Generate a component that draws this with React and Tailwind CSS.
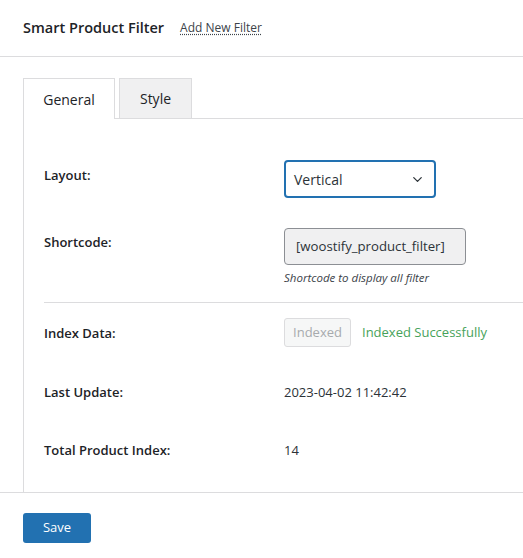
import { ChevronDown } from 'lucide-react'

const rowLabel = 'w-[240px] shrink-0 text-[13px] font-semibold leading-5 text-[#1d2327]'

export default function App() {
  return (
    <div className="min-h-[558px] bg-white font-['Open_Sans',sans-serif] text-[#1d2327]">
      {/* top bar */}
      <header className="flex h-[57px] items-center gap-4 border-b border-[#dcdcde] px-[23px]">
        <h1 className="text-[14.5px] font-semibold text-[#1d2327]">Smart Product Filter</h1>
        <a className="text-[12px] text-[#3c434a] underline decoration-dotted underline-offset-2">Add New Filter</a>
      </header>

      <main className="pl-[23px] pt-[21px]">
        {/* tabs */}
        <div className="flex items-end gap-1">
          <button className="relative z-10 -mb-px h-[41px] w-[92px] border border-b-0 border-[#dcdcde] bg-white text-[14px] text-[#1d2327]">
            General
          </button>
          <button className="h-[40px] w-[73px] border border-b-0 border-[#dcdcde] bg-[#f0f0f1] text-[14px] text-[#1d2327]">
            Style
          </button>
        </div>

        {/* panel */}
        <div className="border-l border-t border-[#dcdcde] pb-[32px] pt-[41px]">
          <div className="flex items-start pl-[20px]">
            <div className={`${rowLabel} pt-[5px]`}>Layout:</div>
            <div className="flex h-[38px] w-[152px] items-center justify-between rounded-[4px] border-2 border-[#2271b1] pl-[8px] pr-[9px] text-[14px] text-[#2c3338]">
              <span>Vertical</span>
              <ChevronDown size={15} strokeWidth={2} className="text-[#2c3338]" />
            </div>
          </div>

          <div className="mt-[30px] flex items-start pl-[20px]">
            <div className={`${rowLabel} pt-[4px]`}>Shortcode:</div>
            <div>
              <div className="flex h-[37px] w-[182px] items-center rounded-[4px] border border-[#8c8f94] bg-[#f0f0f1] px-[11px] text-[13.2px] text-[#2c3338]">
                [woostify_product_filter]
              </div>
              <p className="mt-[5px] text-[11.5px] italic leading-4 text-[#3c434a]">Shortcode to display all filter</p>
            </div>
          </div>

          <div className="ml-[20px] mt-[16px] border-t border-[#dcdcde]" />

          <div className="mt-[15px] flex items-center pl-[20px]">
            <div className={rowLabel}>Index Data:</div>
            <span className="flex h-[29px] w-[67px] items-center justify-center rounded-[3px] border border-[#dcdcde] bg-[#f6f7f7] text-[13px] text-[#a7aaad]">
              Indexed
            </span>
            <span className="ml-[11px] text-[13px] text-[#47a25a]">Indexed Successfully</span>
          </div>

          <div className="mt-[35px] flex items-center pl-[20px]">
            <div className={rowLabel}>Last Update:</div>
            <span className="text-[13px] leading-5 text-[#2c3338]">2023-04-02 11:42:42</span>
          </div>

          <div className="mt-[38px] flex items-center pl-[20px]">
            <div className={rowLabel}>Total Product Index:</div>
            <span className="text-[13px] leading-5 text-[#2c3338]">14</span>
          </div>
        </div>
      </main>

      {/* footer */}
      <footer className="border-t border-[#dcdcde] px-[23px] pt-[20px]">
        <button className="h-[30px] w-[68px] rounded-[3px] bg-[#2271b1] text-[13px] text-white">Save</button>
      </footer>
    </div>
  )
}
